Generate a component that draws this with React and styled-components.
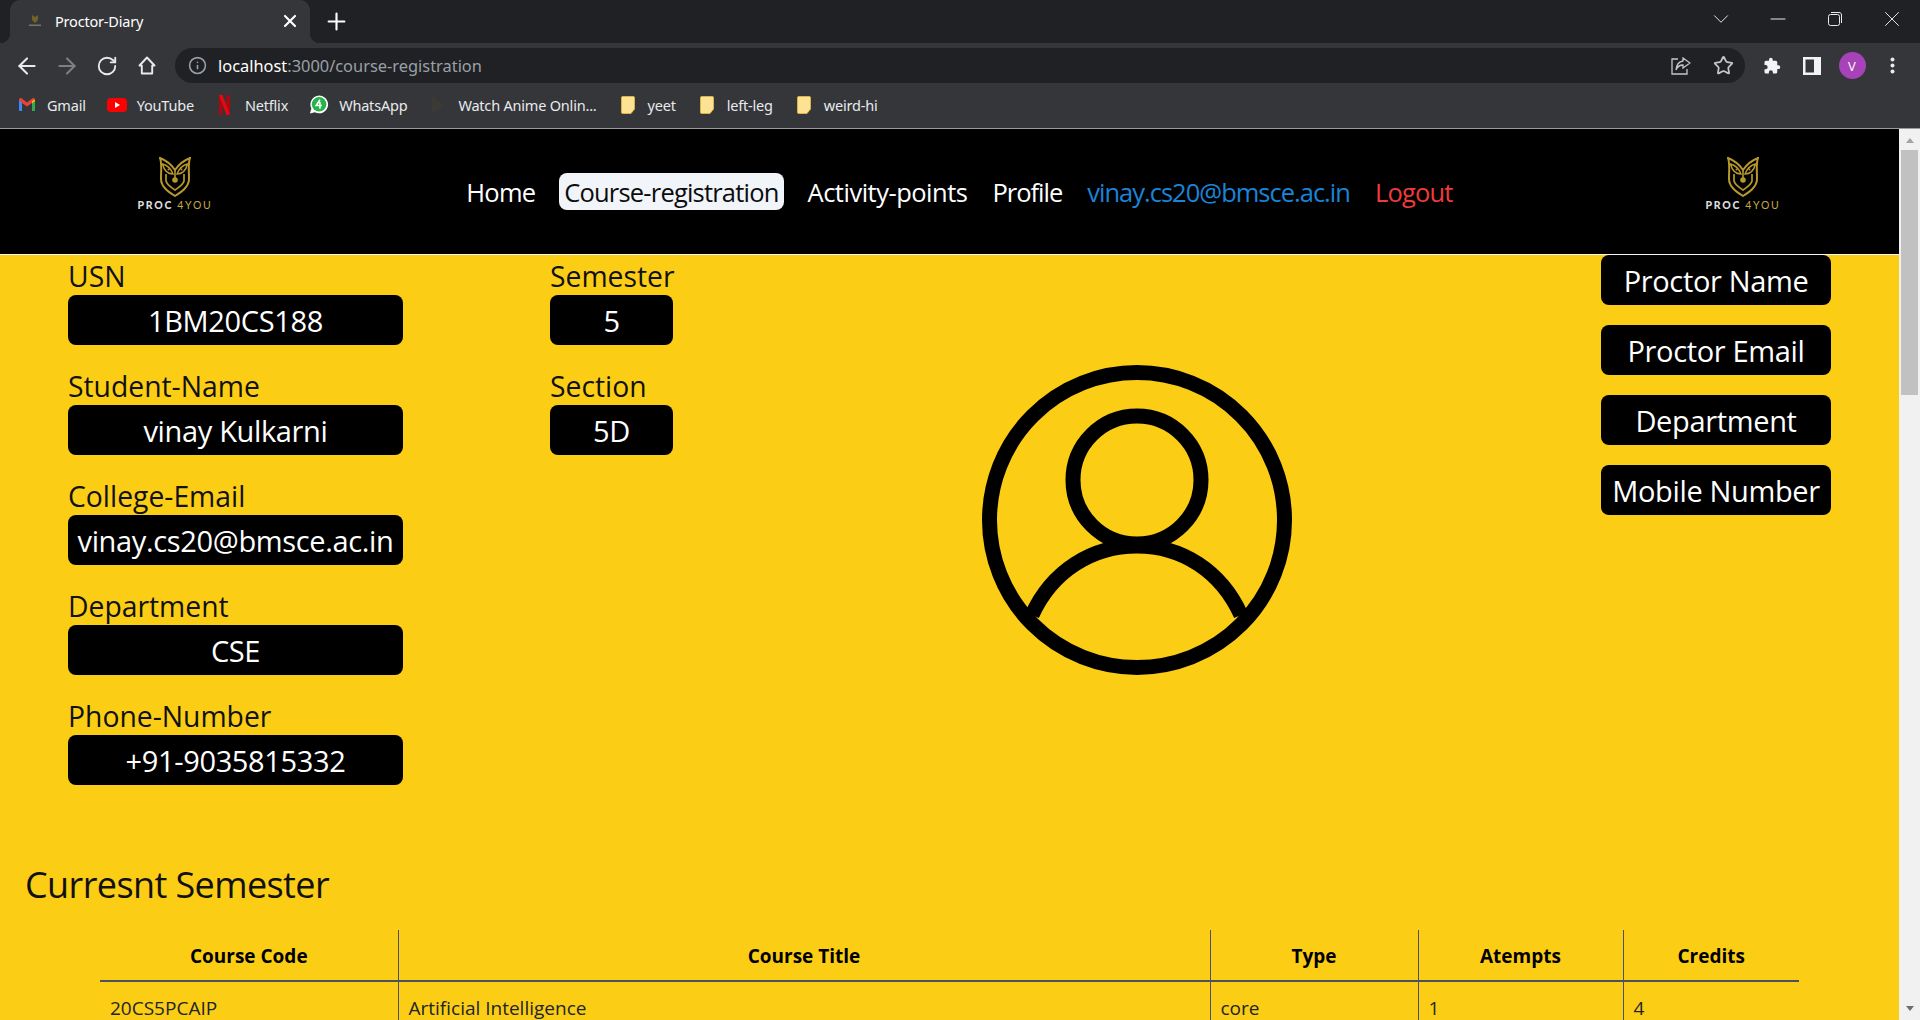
import React from 'react'
import styled, { createGlobalStyle } from 'styled-components'
import { ArrowLeft, ArrowRight, RotateCw, Info, Star, Plus, X, Minus, ChevronDown } from 'lucide-react'

const GlobalStyle = createGlobalStyle`
    html, body {
        margin: 0;
        height: 100%;
        overflow: hidden;
        background: #fccd15;
    }
    * {
        box-sizing: border-box;
    }
    body {
        font-family: 'Open Sans', 'Noto Sans', 'Liberation Sans', sans-serif;
    }
`

const Shell = styled.div`
    display: flex;
    flex-direction: column;
    width: 1920px;
    height: 1020px;
    overflow: hidden;
`

const TabStrip = styled.div`
    display: flex;
    align-items: flex-end;
    height: 43px;
    padding-left: 10px;
    background: #202124;
    color: #fff;
`

const Tab = styled.div`
    position: relative;
    display: flex;
    align-items: center;
    width: 300px;
    height: 43px;
    padding: 0 10px 2px 18px;
    background: #35363a;
    border-radius: 10px 10px 0 0;
    font-size: 14.5px;
    font-family: 'Noto Sans', sans-serif;
    letter-spacing: -0.2px;
    &::before,
    &::after {
        content: '';
        position: absolute;
        bottom: 0;
        width: 10px;
        height: 10px;
    }
    &::before {
        left: -10px;
        background: radial-gradient(circle at 0 0, transparent 10px, #35363a 10.5px);
    }
    &::after {
        right: -10px;
        background: radial-gradient(circle at 100% 0, transparent 10px, #35363a 10.5px);
    }
`

const TabTitle = styled.span`
    flex: 1;
    margin-left: 13px;
`

const NewTab = styled.div`
    display: flex;
    align-items: center;
    height: 43px;
    margin-left: 13px;
`

const WindowControls = styled.div`
    display: flex;
    align-items: center;
    height: 37px;
    margin: 0 0 6px auto;
    color: #e8eaed;
`

const WindowButton = styled.div`
    display: flex;
    align-items: center;
    justify-content: center;
    width: 57px;
`

const Toolbar = styled.div`
    display: flex;
    align-items: center;
    height: 41px;
    padding: 4px 0 0 7px;
    background: #35363a;
    color: #e8eaed;
`

const ToolbarButton = styled.div`
    display: flex;
    align-items: center;
    justify-content: center;
    width: 40px;
`

const AddressBar = styled.div`
    display: flex;
    align-items: center;
    width: 1570px;
    height: 35px;
    margin: 0 7px 0 8px;
    padding: 0 1px 0 13px;
    border-radius: 18px;
    background: #202124;
    color: #9aa0a6;
    font-family: 'Noto Sans', sans-serif;
    font-size: 16.4px;
`

const Url = styled.span`
    flex: 1;
    margin-left: 11px;
    b {
        font-weight: 400;
        color: #fff;
    }
`

const AddressButton = styled.div`
    display: flex;
    align-items: center;
    justify-content: center;
    width: 42px;
    color: #c4c7c9;
`

const Avatar = styled.div`
    display: flex;
    align-items: center;
    justify-content: center;
    width: 27px;
    height: 27px;
    border-radius: 50%;
    background: #a742b8;
    color: #fff;
    font-size: 13px;
`

const Bookmarks = styled.div`
    display: flex;
    align-items: center;
    gap: 21px;
    height: 45px;
    padding: 0 0 3px 17px;
    background: #35363a;
    border-bottom: 1px solid #9a9a9a;
    color: #e8eaed;
    font-family: 'Noto Sans', sans-serif;
    font-size: 14.5px;
    letter-spacing: -0.2px;
`

const Bookmark = styled.div`
    display: flex;
    align-items: center;
    gap: 10px;
`

const BookmarkIcon = styled.span`
    display: flex;
    align-items: center;
    justify-content: center;
    width: 20px;
`

const Viewport = styled.div`
    display: flex;
    flex: 1;
    min-height: 0;
`

const Page = styled.main`
    flex: 1;
    min-width: 0;
    overflow: hidden;
    background: #fccd15;
`

const Scrollbar = styled.div`
    display: flex;
    flex-direction: column;
    align-items: center;
    width: 21px;
    background: #f1f1f1;
`

const ScrollThumb = styled.div`
    width: 17px;
    height: 245px;
    margin: 7px 0 auto;
    background: #c1c1c1;
`

const Arrow = styled.div`
    width: 0;
    height: 0;
    border-left: 4.5px solid transparent;
    border-right: 4.5px solid transparent;
    ${props =>
        props.$up
            ? 'margin-top: 9px; border-bottom: 5px solid #a3a3a3;'
            : 'margin-bottom: 9px; border-top: 5px solid #6e6e6e;'}
`

const Navbar = styled.nav`
    display: flex;
    align-items: center;
    justify-content: space-between;
    height: 126px;
    padding: 0 118px 0 137px;
    background: #000;
    border-bottom: 1px solid #f4f4f4;
`

const NavLinks = styled.div`
    display: flex;
    align-items: center;
    gap: 15px;
    margin-left: 1px;
`

const NavLink = styled.a`
    height: 37px;
    padding: 0 5px;
    font-size: 25.5px;
    line-height: 39px;
    letter-spacing: ${props => props.$spacing ?? -0.8}px;
    color: ${props => props.$color || '#fff'};
`

const ActiveNavLink = styled(NavLink)`
    margin: 0 4px;
    border-radius: 8px;
    background: #f1f4f9;
    color: #0c0c0c;
`

const LogoWrap = styled.div`
    display: flex;
    flex-direction: column;
    align-items: center;
    width: 76px;
    margin-top: -15px;
`

const LogoText = styled.div`
    margin-top: 2px;
    font-family: 'Lato', sans-serif;
    font-size: 10.5px;
    line-height: 12px;
    font-weight: 900;
    letter-spacing: 1.7px;
    white-space: nowrap;
    color: #dcdcdc;
    span {
        color: #c2ab4a;
        font-weight: 400;
    }
`

const ProfileRow = styled.section`
    display: flex;
    padding: 0 68px;
`

const FieldColumn = styled.div`
    display: flex;
    flex-direction: column;
    gap: 20px;
    width: ${props => props.$width}px;
`

const Field = styled.div`
    width: ${props => props.$width}px;
`

const FieldLabel = styled.div`
    height: 40px;
    font-size: 28.3px;
    line-height: 42px;
    color: #111;
`

const ValueBox = styled.div`
    display: flex;
    align-items: center;
    justify-content: center;
    height: 50px;
    border-radius: 8px;
    background: #000;
    color: #fff;
    font-size: 29px;
    letter-spacing: -0.35px;
    white-space: nowrap;
`

const AvatarColumn = styled.div`
    display: flex;
    flex: 1;
    justify-content: center;
    padding-top: 110px;
`

const ProctorColumn = styled.div`
    display: flex;
    flex-direction: column;
    gap: 20px;
    width: 230px;
`

const Heading = styled.h2`
    margin: 76px 0 21px 25px;
    font-size: 36px;
    font-weight: 400;
    line-height: 48px;
    letter-spacing: -0.6px;
    color: #111;
`

const CourseTable = styled.table`
    width: 1699px;
    margin-left: 100px;
    border-collapse: collapse;
    table-layout: fixed;
    font-size: 19px;
    color: #212529;
`

const HeadCell = styled.th`
    height: 51px;
    width: ${props => props.$width}px;
    padding: 2px 0 0;
    border-right: 1px solid #4a5160;
    border-bottom: 2px solid #4a5160;
    font-weight: 700;
    color: #000;
    &:last-child {
        border-right: 0;
    }
`

const BodyCell = styled.td`
    height: 52px;
    padding: 0 10px;
    border-right: 1px solid #4a5160;
    &:last-child {
        border-right: 0;
    }
`

const OwlLogo = () => (
    <svg width="32" height="40" viewBox="0 0 32 40" fill="none" stroke="#b8982a" strokeWidth="2">
        <path d="M1 1 C6 3 12 7 16 13 C20 7 26 3 31 1 C29 6 30 12 30 22 C30 30 22 35 16 39 C10 35 2 30 2 22 C2 12 3 6 1 1Z" />
        <path d="M3.5 7 C8 8 12 12 14 17 C9 17 5 13 3.5 7Z" strokeWidth="1.5" />
        <path d="M28.5 7 C24 8 20 12 18 17 C23 17 27 13 28.5 7Z" strokeWidth="1.5" />
        <circle cx="9.5" cy="12.5" r="1" fill="#b8982a" stroke="none" />
        <circle cx="22.5" cy="12.5" r="1" fill="#b8982a" stroke="none" />
        <path d="M7 17 V24 C8 28 12 30 16 33 C20 30 24 28 25 24 V17" strokeWidth="1.7" />
        <path d="M16 13 V22" strokeWidth="1.6" />
        <circle cx="16" cy="23" r="2.8" fill="#b8982a" stroke="none" />
    </svg>
)

const Logo = () => (
    <LogoWrap>
        <OwlLogo />
        <LogoText>
            PROC <span>4YOU</span>
        </LogoText>
    </LogoWrap>
)

const Favicon = () => (
    <svg width="14" height="12" viewBox="0 0 14 12">
        <path d="M4 0 L7 2 L10 0 L10 5 L7 8 L4 5Z" fill="#6f6326" />
        <path d="M1 9.5 H13 V11 H1Z" fill="#77766e" />
    </svg>
)

const UserIcon = () => (
    <svg width="310" height="310" viewBox="0 0 310 310" fill="none" stroke="#000" strokeWidth="15">
        <circle cx="155" cy="155" r="147.5" />
        <circle cx="155" cy="115" r="64" />
        <path d="M50 250 C70 206 110 181 155 181 C200 181 239 206 259 250" />
    </svg>
)

const HomeIcon = () => (
    <svg width="18" height="19" viewBox="0 0 18 19" fill="none" stroke="currentColor" strokeWidth="1.9" strokeLinejoin="round">
        <path d="M9 1.5 L1.5 9.5 H3.8 V17.5 H14.2 V9.5 H16.5Z" />
    </svg>
)

const GmailIcon = () => (
    <svg width="16" height="13" viewBox="0 0 16 13">
        <path d="M0 2 L3 3 V13 H1 C.4 13 0 12.6 0 12Z" fill="#4285f4" />
        <path d="M16 2 L13 3 V13 H15 C15.6 13 16 12.6 16 12Z" fill="#34a853" />
        <path d="M0 2 C0 .4 1.6 -.4 2.8 .5 L8 4.5 L13.2 .5 C14.4 -.4 16 .4 16 2 L13 5 L8 8.5 L3 5Z" fill="#ea4335" />
        <path d="M13 3 L16 1.5 V3 L13 5.5Z" fill="#fbbc04" />
    </svg>
)

const YouTubeIcon = () => (
    <svg width="20" height="14" viewBox="0 0 20 14">
        <rect width="20" height="14" rx="4" fill="#f00" />
        <path d="M8 4 L13 7 L8 10Z" fill="#fff" />
    </svg>
)

const NetflixIcon = () => (
    <svg width="11" height="20" viewBox="0 0 11 20">
        <path d="M0 0 H3.5 V20 L0 19.5Z" fill="#b1060f" />
        <path d="M7.5 0 H11 V19.5 L7.5 20Z" fill="#b1060f" />
        <path d="M0 0 H3.5 L11 19.5 L7.5 20Z" fill="#e50914" />
    </svg>
)

const WhatsAppIcon = () => (
    <svg width="21" height="21" viewBox="0 0 21 21">
        <path d="M1 20 L2.5 14.8 A9.3 9.3 0 1 1 6.2 18.6Z" fill="#fff" />
        <circle cx="10.6" cy="10.3" r="7.6" fill="#25b34a" />
        <path d="M11.5 5.5 L7.5 11.5 H13.5 M11.5 8 V15" fill="none" stroke="#fff" strokeWidth="1.6" />
    </svg>
)

const PlayIcon = () => (
    <svg width="16" height="20" viewBox="0 0 16 20">
        <path d="M2 1 L14 10 L2 19Z" fill="#3c3a35" />
    </svg>
)

const NoteIcon = () => (
    <svg width="14" height="18" viewBox="0 0 14 18">
        <path d="M.5 1.5 C.5 1 1 .5 1.5 .5 H12.5 C13 .5 13.5 1 13.5 1.5 V13 L10 17.5 H1.5 C1 17.5 .5 17 .5 16.5Z" fill="#fde293" stroke="#d9b24a" />
    </svg>
)

const ShareIcon = () => (
    <svg width="20" height="18" viewBox="0 0 20 18" fill="none" stroke="currentColor" strokeWidth="1.3">
        <path d="M7 2 H1 V17 H16 V12" />
        <path d="M12 1 L19 6 L12 11 V8 C9 8 6.5 9.5 5 13 C5.5 8 8 4.5 12 4Z" />
    </svg>
)

const PuzzleIcon = () => (
    <svg width="18" height="18" viewBox="0 0 24 24" fill="#f1f3f4">
        <path d="M20.5 11H19V7a2 2 0 0 0-2-2h-4V3.5a2.5 2.5 0 0 0-5 0V5H4a2 2 0 0 0-2 2v3.8h1.5a2.7 2.7 0 0 1 0 5.4H2V20a2 2 0 0 0 2 2h3.8v-1.5a2.7 2.7 0 0 1 5.4 0V22H17a2 2 0 0 0 2-2v-4h1.5a2.5 2.5 0 0 0 0-5z" />
    </svg>
)

const SidePanelIcon = () => (
    <svg width="18" height="18" viewBox="0 0 18 18">
        <path d="M0 0 H18 V18 H0Z M2.5 2.5 V15.5 H11 V2.5Z" fill="#f1f3f4" fillRule="evenodd" />
    </svg>
)

const DotsIcon = () => (
    <svg width="5" height="17" viewBox="0 0 5 17" fill="#e8eaed">
        <circle cx="2.5" cy="2.5" r="2" />
        <circle cx="2.5" cy="8.5" r="2" />
        <circle cx="2.5" cy="14.5" r="2" />
    </svg>
)

const RestoreIcon = () => (
    <svg width="14" height="14" viewBox="0 0 14 14" fill="none" stroke="currentColor">
        <rect x=".5" y="2.5" width="11" height="11" rx="2" />
        <path d="M3 .5 H11 C12.5 .5 13.5 1.5 13.5 3 V11" />
    </svg>
)

const bookmarks = [
    { icon: <GmailIcon />, label: 'Gmail' },
    { icon: <YouTubeIcon />, label: 'YouTube' },
    { icon: <NetflixIcon />, label: 'Netflix' },
    { icon: <WhatsAppIcon />, label: 'WhatsApp' },
    { icon: <PlayIcon />, label: 'Watch Anime Onlin...' },
    { icon: <NoteIcon />, label: 'yeet' },
    { icon: <NoteIcon />, label: 'left-leg' },
    { icon: <NoteIcon />, label: 'weird-hi' }
]

const studentFields = [
    ['USN', '1BM20CS188'],
    ['Student-Name', 'vinay Kulkarni'],
    ['College-Email', 'vinay.cs20@bmsce.ac.in'],
    ['Department', 'CSE'],
    ['Phone-Number', '+91-9035815332']
]

const classFields = [
    ['Semester', '5'],
    ['Section', '5D']
]

const proctorFields = ['Proctor Name', 'Proctor Email', 'Department', 'Mobile Number']

const columns = [
    ['Course Code', 298],
    ['Course Title', 812],
    ['Type', 208],
    ['Atempts', 205],
    ['Credits', 176]
]

const BrowserChrome = () => (
    <>
        <TabStrip>
            <Tab>
                <Favicon />
                <TabTitle>Proctor-Diary</TabTitle>
                <X size={20} strokeWidth={2.6} />
            </Tab>
            <NewTab>
                <Plus size={27} strokeWidth={1.9} />
            </NewTab>
            <WindowControls>
                <WindowButton>
                    <ChevronDown size={26} strokeWidth={0.9} />
                </WindowButton>
                <WindowButton>
                    <Minus size={24} strokeWidth={1} />
                </WindowButton>
                <WindowButton>
                    <RestoreIcon />
                </WindowButton>
                <WindowButton>
                    <X size={26} strokeWidth={0.9} />
                </WindowButton>
            </WindowControls>
        </TabStrip>
        <Toolbar>
            <ToolbarButton>
                <ArrowLeft size={26} strokeWidth={1.9} />
            </ToolbarButton>
            <ToolbarButton>
                <ArrowRight size={26} strokeWidth={1.9} color="#7d7f82" />
            </ToolbarButton>
            <ToolbarButton>
                <RotateCw size={22} strokeWidth={2} />
            </ToolbarButton>
            <ToolbarButton>
                <HomeIcon />
            </ToolbarButton>
            <AddressBar>
                <Info size={19} strokeWidth={2} />
                <Url>
                    <b>localhost</b>:3000/course-registration
                </Url>
                <AddressButton>
                    <ShareIcon />
                </AddressButton>
                <AddressButton>
                    <Star size={21} strokeWidth={2} />
                </AddressButton>
            </AddressBar>
            <ToolbarButton>
                <PuzzleIcon />
            </ToolbarButton>
            <ToolbarButton>
                <SidePanelIcon />
            </ToolbarButton>
            <ToolbarButton>
                <Avatar>V</Avatar>
            </ToolbarButton>
            <ToolbarButton>
                <DotsIcon />
            </ToolbarButton>
        </Toolbar>
        <Bookmarks>
            {bookmarks.map(b => (
                <Bookmark key={b.label}>
                    <BookmarkIcon>{b.icon}</BookmarkIcon>
                    {b.label}
                </Bookmark>
            ))}
        </Bookmarks>
    </>
)

export default function App() {
    return (
        <Shell>
            <GlobalStyle />
            <BrowserChrome />
            <Viewport>
                <Page>
                    <Navbar>
                        <Logo />
                        <NavLinks>
                            <NavLink>Home</NavLink>
                            <ActiveNavLink>Course-registration</ActiveNavLink>
                            <NavLink $spacing={-0.5}>Activity-points</NavLink>
                            <NavLink $spacing={-1}>Profile</NavLink>
                            <NavLink $spacing={-1} $color="#1a84d8">
                                vinay.cs20@bmsce.ac.in
                            </NavLink>
                            <NavLink $color="#ef3b3b">Logout</NavLink>
                        </NavLinks>
                        <Logo />
                    </Navbar>
                    <ProfileRow>
                        <FieldColumn $width={482}>
                            {studentFields.map(([label, value]) => (
                                <Field key={label} $width={335}>
                                    <FieldLabel>{label}</FieldLabel>
                                    <ValueBox>{value}</ValueBox>
                                </Field>
                            ))}
                        </FieldColumn>
                        <FieldColumn $width={123}>
                            {classFields.map(([label, value]) => (
                                <Field key={label} $width={123}>
                                    <FieldLabel>{label}</FieldLabel>
                                    <ValueBox>{value}</ValueBox>
                                </Field>
                            ))}
                        </FieldColumn>
                        <AvatarColumn>
                            <UserIcon />
                        </AvatarColumn>
                        <ProctorColumn>
                            {proctorFields.map(label => (
                                <ValueBox key={label}>{label}</ValueBox>
                            ))}
                        </ProctorColumn>
                    </ProfileRow>
                    <Heading>Curresnt Semester</Heading>
                    <CourseTable>
                        <thead>
                            <tr>
                                {columns.map(([title, width]) => (
                                    <HeadCell key={title} $width={width}>
                                        {title}
                                    </HeadCell>
                                ))}
                            </tr>
                        </thead>
                        <tbody>
                            <tr>
                                <BodyCell>20CS5PCAIP</BodyCell>
                                <BodyCell>Artificial Intelligence</BodyCell>
                                <BodyCell>core</BodyCell>
                                <BodyCell>1</BodyCell>
                                <BodyCell>4</BodyCell>
                            </tr>
                        </tbody>
                    </CourseTable>
                </Page>
                <Scrollbar>
                    <Arrow $up />
                    <ScrollThumb />
                    <Arrow />
                </Scrollbar>
            </Viewport>
        </Shell>
    )
}
